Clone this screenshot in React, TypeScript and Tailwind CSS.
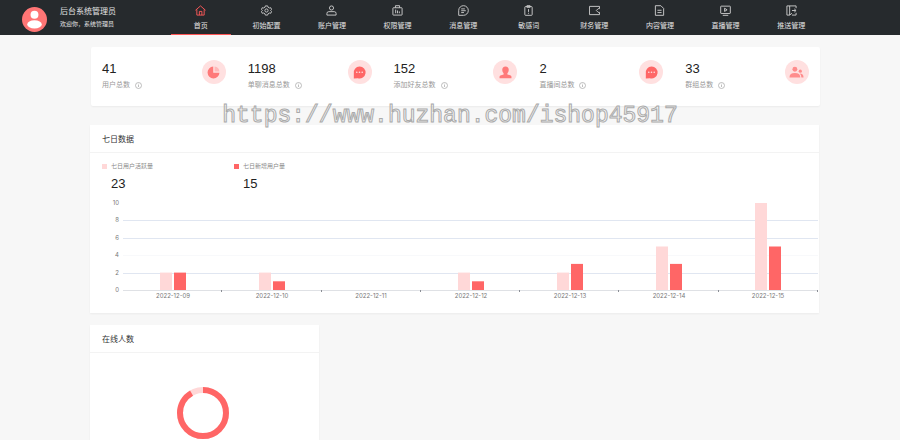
import type { ReactNode } from 'react'

type NavItem = { label: string; icon: ReactNode }

const navItems: NavItem[] = [
  {
    label: '首页',
    icon: (
      <>
        <path d="M1 11.5 12 2l11 9.5" />
        <path d="M4 9.5V22h16V9.5" />
        <path d="M9.5 22v-8h5.5v8" />
      </>
    ),
  },
  {
    label: '初始配置',
    icon: (
      <>
        <path d="M9.5 2h5l1 3 3 1.500 3-.5 1.500 4-2 2 2 2-1.500 4-3-.5-3 1.500-1 3h-5l-1-3-3-1.500-3 .5L1 14l2-2-2-2 1.500-4 3 .5 3-1.500z" />
        <circle cx="12" cy="12" r="3.500" />
      </>
    ),
  },
  {
    label: '账户管理',
    icon: (
      <>
        <circle cx="12" cy="6.500" r="4.500" />
        <path d="M2 22v-3.500q0-4 4-4h12q4 0 4 4V22z" />
      </>
    ),
  },
  {
    label: '权限管理',
    icon: (
      <>
        <rect x="2" y="6" width="20" height="16" rx="1" />
        <path d="M7.500 6V1.500h9V6M8 10v8M12 12v6M16 14v4" />
      </>
    ),
  },
  {
    label: '消息管理',
    icon: (
      <>
        <path d="M1.500 22.500V11.500a10.500 10.500 0 1 1 10.500 11z" />
        <path d="M7 8.500h8M7 12.500h10M7 16.500h6" />
      </>
    ),
  },
  {
    label: '敏感词',
    icon: (
      <>
        <rect x="4" y="3.500" width="16" height="19" rx="1.500" />
        <path d="M8.500 3.500v-2h7v3.500h-7zM12 9v6M12 17v2" />
      </>
    ),
  },
  {
    label: '财务管理',
    icon: (
      <>
        <path d="M23 8V3H1v18h22v-5" />
        <path d="M23 8h-3l-4 4 4 4h3" />
      </>
    ),
  },
  {
    label: '内容管理',
    icon: (
      <>
        <path d="M3 1.500h12l6 6v15H3z" />
        <path d="M7.500 11.500h9M7.500 16.500h9" />
      </>
    ),
  },
  {
    label: '直播管理',
    icon: (
      <>
        <rect x="1.500" y="2.500" width="21" height="16" rx="1" />
        <path d="M6 22.500h12M10 7l5.500 3.500L10 14z" />
      </>
    ),
  },
  {
    label: '推送管理',
    icon: (
      <>
        <path d="M22 7V2H2v20h6M22 17v5h-9" />
        <path d="M8 2v20l5-4M13 12h8M18 8.500l4 3.500-4 3.500" />
      </>
    ),
  },
]

const chatIcon = (
  <>
    <path d="M12 1a11 11 0 1 1-3 21.500L1.500 23v-9A11 11 0 0 1 12 1z" fill="#ff6666" />
    <g fill="#ffe0e0">
      <circle cx="7" cy="11.500" r="1.500" />
      <circle cx="12" cy="11.500" r="1.500" />
      <circle cx="17" cy="11.500" r="1.500" />
    </g>
  </>
)

const stats = [
  {
    value: 41,
    label: '用户总数',
    icon: (
      <>
        <path d="M11.500 1A11 11 0 1 0 23 12.500H11.500z" fill="#ff7979" />
        <path d="M14 1a10 10 0 0 1 9 9h-9z" fill="#ffb9b9" />
      </>
    ),
  },
  { value: 1198, label: '单聊消息总数', icon: chatIcon },
  {
    value: 152,
    label: '添加好友总数',
    icon: (
      <path
        d="M12 1c4 0 6 3 6 6 0 3-1 5-2.500 6.500v2l6 2Q23 18 23 20v2.500H1V20q0-2 1.500-2.500l6-2v-2C7 12 6 10 6 7c0-3 2-6 6-6z"
        fill="#ff7979"
      />
    ),
  },
  { value: 2, label: '直播间总数', icon: chatIcon },
  {
    value: 33,
    label: '群组总数',
    icon: (
      <>
        <circle cx="9" cy="6" r="4.500" fill="#ff8c8c" />
        <circle cx="19" cy="9.500" r="3" fill="#ff8c8c" />
        <path d="M-1 21q0-8 10-8t10 8z" fill="#ff8c8c" />
        <path d="M18 14q7 0 7 7h-4q0-4-3-7z" fill="#ff8c8c" />
      </>
    ),
  },
]

const days = [
  { date: '2022-12-09', active: 2, added: 2 },
  { date: '2022-12-10', active: 2, added: 1 },
  { date: '2022-12-11', active: 0, added: 0 },
  { date: '2022-12-12', active: 2, added: 1 },
  { date: '2022-12-13', active: 2, added: 3 },
  { date: '2022-12-14', active: 5, added: 3 },
  { date: '2022-12-15', active: 10, added: 5 },
]

const legend = [
  { label: '七日用户活跃量', total: 23, swatch: 'bg-[#ffd8d8]' },
  { label: '七日新增用户量', total: 15, swatch: 'bg-[#ff6666]' },
]

function Header() {
  return (
    <header className="flex h-[35px] bg-[#262a2d] text-[#e4e4e4]">
      <div className="flex w-[168px] shrink-0 items-center pl-[22px] pt-1">
        <svg viewBox="0 0 24 24" className="size-[25px]" aria-hidden="true">
          <circle cx="12" cy="12" r="12" fill="#ff7575" />
          <circle cx="12" cy="7.500" r="3.800" fill="#fff" />
          <ellipse cx="12" cy="16.700" rx="7" ry="4" fill="#fff" />
        </svg>
        <div className="-mt-1 ml-[13px]">
          <div className="text-[8px] leading-[13px]">后台系统管理员</div>
          <div className="text-[6px] leading-[12px]">欢迎你，系统管理员</div>
        </div>
      </div>
      <nav className="mr-[76px] flex flex-1">
        {navItems.map((item, i) => (
          <a
            key={item.label}
            href="#"
            className={`mx-[3px] flex flex-1 flex-col items-center border-b pt-[5px] ${
              i === 0 ? 'border-[#ff5555]' : 'border-transparent'
            }`}
          >
            <svg
              viewBox="0 0 24 24"
              className={`size-[11px] ${i === 0 ? 'text-[#ff5a5a]' : 'text-[#cfcfcf]'}`}
              fill="none"
              stroke="currentColor"
              strokeWidth="2"
              aria-hidden="true"
            >
              {item.icon}
            </svg>
            <span className="mt-[5px] text-[7px] leading-[10px]">{item.label}</span>
          </a>
        ))}
      </nav>
    </header>
  )
}

function Stats() {
  return (
    <section className="ml-px flex h-[59px] rounded-xs bg-white shadow-xs">
      {stats.map((s) => (
        <div key={s.label} className="flex flex-1 justify-between pl-[11px] pr-[11px] pt-[13px]">
          <div>
            <div className="text-[13px] leading-[17px] text-[#222]">{s.value}</div>
            <div className="mt-[3px] flex items-center gap-[5px] text-[7px] leading-[10px] text-[#999]">
              {s.label}
              <svg viewBox="0 0 14 14" className="size-[7px]" fill="none" stroke="#aaa" aria-hidden="true">
                <circle cx="7" cy="7" r="6" strokeWidth="1.500" />
                <path d="M7 6v4M7 3.500v1.500" strokeWidth="1.500" />
              </svg>
            </div>
          </div>
          <div className="flex size-6 items-center justify-center rounded-full bg-[#ffe0e0]">
            <svg viewBox="0 0 24 24" className="size-[13px] overflow-visible" aria-hidden="true">
              {s.icon}
            </svg>
          </div>
        </div>
      ))}
    </section>
  )
}

function BarChart() {
  const left = 33
  const right = 728
  const base = 94
  const unit = 8.7
  const step = (right - left) / days.length

  return (
    <svg viewBox="0 0 729 117" className="mt-1 block w-full font-['Inter','Noto_Sans',sans-serif]" role="img" aria-label="七日数据">
      {[0, 2, 4, 6, 8, 10].map((v) => {
        const y = Math.round(base - v * unit)
        return (
          <g key={v}>
            {v > 0 && v < 10 && (
              <path d={`M${left} ${y + 0.5}H${right}`} stroke={v === 4 ? '#f8f9fb' : '#e0e6f1'} />
            )}
            <text x={29} y={y + 2} textAnchor="end" fontSize={6} fill="#777">
              {v}
            </text>
          </g>
        )
      })}
      {days.map((d, i) => {
        const cx = Math.round(left + step * (i + 0.5))
        return (
          <g key={d.date}>
            <rect x={cx - 13} y={base - d.active * unit} width={12} height={d.active * unit} fill="#ffd8d8" />
            <rect x={cx + 1} y={base - d.added * unit} width={12} height={d.added * unit} fill="#ff6666" />
            <text x={cx} y={base + 8} textAnchor="middle" fontSize={6} fill="#777">
              {d.date}
            </text>
          </g>
        )
      })}
      <path d={`M${left} ${base + 0.5}H${right}`} stroke="#dfe1e5" />
      {days.map((d, i) => (
        <path
          key={d.date}
          d={`M${Math.round(left + step * (i + 1)) - 0.5} ${base}v2`}
          stroke="#8b8e95"
        />
      ))}
    </svg>
  )
}

function WeekCard() {
  return (
    <section className="mr-px mt-[19px] bg-white shadow-xs">
      <h2 className="border-b border-[#f3f3f3] px-3 pb-[7px] pt-[9px] text-[8px] leading-[11px] text-[#333]">七日数据</h2>
      <div className="flex px-3 pt-2">
        {legend.map((l) => (
          <div key={l.label} className="w-[132px]">
            <div className="flex items-center gap-1 text-[6px] leading-[10px] text-[#888]">
              <span className={`size-[5px] ${l.swatch}`} />
              {l.label}
            </div>
            <div className="ml-[9px] mt-1 text-[13px] leading-[17px] text-[#222]">{l.total}</div>
          </div>
        ))}
      </div>
      <BarChart />
    </section>
  )
}

function OnlineCard() {
  return (
    <section className="bg-white pb-2 shadow-xs">
      <h2 className="border-b border-[#f3f3f3] px-3 pb-[7px] pt-[9px] text-[8px] leading-[11px] text-[#333]">在线人数</h2>
      <div className="flex justify-center pr-[3px] pt-[34px]">
        <svg viewBox="0 0 52 52" className="size-[52px]" fill="none" role="img" aria-label="在线人数">
          <circle cx="26" cy="26" r="23" stroke="#ffd8d8" strokeWidth="6" />
          <circle
            cx="26"
            cy="26"
            r="23"
            stroke="#ff6666"
            strokeWidth="6"
            pathLength="12"
            strokeDasharray="11 1"
            transform="rotate(-90 26 26)"
          />
        </svg>
      </div>
    </section>
  )
}

export default function App() {
  return (
    <div className="h-screen overflow-hidden bg-[#f7f7f7] font-['Liberation_Sans','Noto_Sans_CJK_SC',sans-serif]">
      <Header />
      <main className="relative pl-[90px] pr-20 pt-3">
        <Stats />
        <WeekCard />
        <div className="mr-px mt-3 grid grid-cols-3 gap-[21px]">
          <OnlineCard />
        </div>
        {/* 水印 */}
        <div className="pointer-events-none absolute inset-x-0 top-[68px] text-center font-['Liberation_Mono',monospace] text-[23px] leading-[26px] text-transparent [-webkit-text-stroke:1px_#aaa]">
          https://www.huzhan.com/ishop45917
        </div>
      </main>
    </div>
  )
}
